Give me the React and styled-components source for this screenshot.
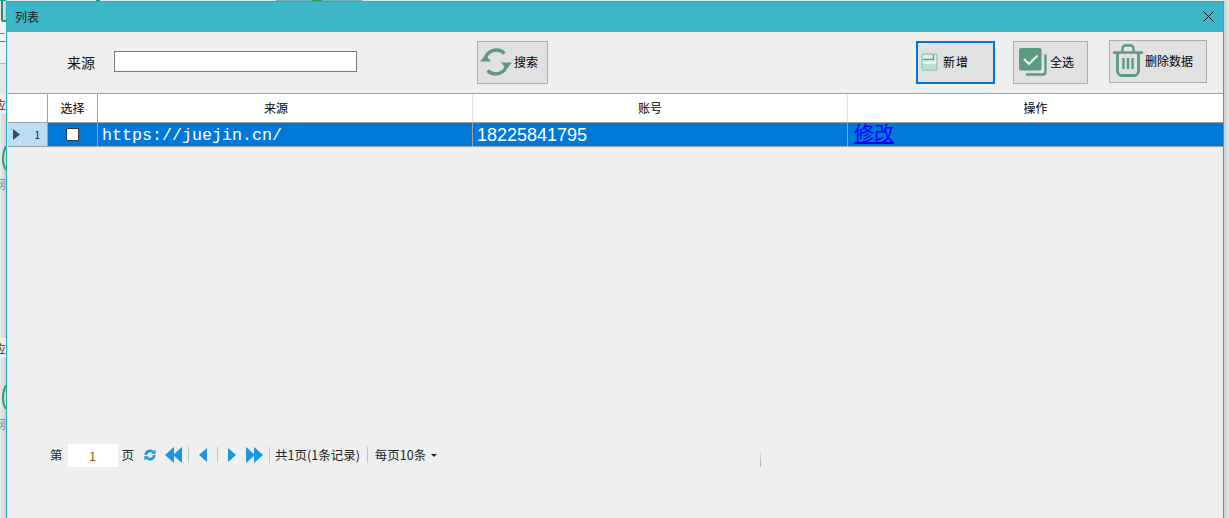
import React from 'react';
import styled, { createGlobalStyle } from 'styled-components';

const GlobalStyle = createGlobalStyle`
    html, body {
        margin: 0;
        padding: 0;
        background: #dedede;
        overflow: hidden;
    }
    body {
        font-family: "Noto Sans CJK SC", "Liberation Sans", sans-serif;
        color: #000;
    }
`;

const Page = styled.div`
    width: 1229px;
    height: 518px;
    display: flex;
    flex-direction: column;
    overflow: hidden;
`;

const TopEdge = styled.div`
    height: 1px;
    flex: none;
    background: linear-gradient(90deg,
        #1c9a8a 0 6px, #dfe8e8 6px 96px, #1c9a8a 96px 100px, #dfe8e8 100px 276px,
        #6fb3c0 276px 312px, #1e9e55 312px 322px, #6fb3c0 322px 362px, #dfe8e8 362px);
`;

const Body = styled.div`
    flex: 1;
    display: flex;
    min-height: 0;
`;

const LeftStrip = styled.div`
    width: 6px;
    flex: none;
    display: flex;
    flex-direction: column;
    overflow: hidden;
    background: linear-gradient(90deg, #ececec, #cfcfcf);
`;

const StripLogo = styled.div`
    height: 21px;
    width: 10px;
    flex: none;
    margin-left: 1px;
    box-sizing: border-box;
    border-left: 2px solid #17907f;
    border-bottom: 2px solid #17907f;
    border-bottom-left-radius: 3px;
`;

const StripText = styled.div`
    height: ${(p) => p.$h}px;
    flex: none;
    display: flex;
    justify-content: flex-end;
    align-items: center;
    white-space: nowrap;
    font-size: 12px;
    color: ${(p) => p.$color || '#333'};
    background: ${(p) => p.$bg || 'transparent'};
`;

const StripGap = styled.div`
    height: ${(p) => p.$h}px;
    flex: none;
    background: ${(p) => p.$bg || 'transparent'};
    border-bottom: ${(p) => (p.$line ? '1px solid #b5b5b5' : 'none')};
    box-sizing: border-box;
`;

const StripArc = styled.svg`
    display: block;
    flex: none;
`;

const RightStrip = styled.div`
    width: 5px;
    flex: none;
    background: linear-gradient(90deg, #c9c9c9, #ececec);
`;

const Win = styled.div`
    flex: 1;
    min-width: 0;
    display: flex;
    flex-direction: column;
    border: 1px solid #22b0c4;
    border-bottom: none;
    background: #efefef;
`;

const TitleBar = styled.div`
    height: 30px;
    flex: none;
    box-sizing: border-box;
    padding: 0 9px 2px 8px;
    background: #3db6c8;
    display: flex;
    align-items: center;
    justify-content: space-between;
    font-size: 12px;
    color: #1a1a1a;
`;

const CloseIcon = styled.svg`
    display: block;
`;

const Toolbar = styled.div`
    height: 61px;
    flex: none;
    box-sizing: border-box;
    padding: 9px 0 0 60px;
    display: flex;
    align-items: flex-start;
`;

const SearchLabel = styled.span`
    width: 28px;
    margin-top: 10px;
    font-size: 14px;
    line-height: 22px;
    color: #111;
`;

const SearchInput = styled.input`
    width: 243px;
    height: 21px;
    margin: 10px 120px 0 19px;
    box-sizing: border-box;
    border: 1px solid #7a7a7a;
    background: #fff;
    padding: 0 3px;
    outline: none;
`;

const ToolButton = styled.button`
    width: ${(p) => p.$w}px;
    height: 43px;
    flex: none;
    margin: ${(p) => (p.$raised ? '-1px' : '0')} 0 0 ${(p) => p.$gap || 0}px;
    padding: 0 0 2px ${(p) => p.$pad}px;
    box-sizing: border-box;
    display: flex;
    align-items: center;
    gap: ${(p) => p.$iconGap}px;
    border: ${(p) => (p.$focused ? '2px solid #0078d7' : '1px solid #adadad')};
    background: #e1e1e1;
    font-family: inherit;
    font-size: 12px;
    letter-spacing: ${(p) => (p.$spaced ? '1px' : '0')};
    color: #000;
    white-space: nowrap;
`;

const Icon = styled.svg`
    display: block;
    flex: none;
`;

const Table = styled.div`
    margin-left: 1px;
    flex: none;
`;

const Row = styled.div`
    display: grid;
    grid-template-columns: 40px 50px 375px 375px 375px;
    height: ${(p) => p.$h}px;
    box-sizing: border-box;
    border-top: ${(p) => (p.$head ? '1px solid #a0a0a0' : 'none')};
    border-bottom: 1px solid #a0a0a0;
`;

const HeadCell = styled.div`
    background: #fff;
    display: flex;
    align-items: center;
    justify-content: center;
    box-sizing: border-box;
    padding: 0 ${(p) => p.$shift || 0}px 1px 0;
    font-size: 12px;
    border-right: 1px solid ${(p) => (p.$strong ? '#a0a0a0' : '#e3e3e3')};
    &:last-child {
        border-right: none;
    }
`;

const RowHeader = styled.div`
    background: #bcdcf4;
    display: flex;
    align-items: center;
    justify-content: space-between;
    padding: 0 7px 0 5px;
    font-size: 10px;
    color: #222;
    border-right: 1px solid #a0a0a0;
`;

const Cell = styled.div`
    background: #0078d7;
    color: #fff;
    display: flex;
    align-items: center;
    justify-content: ${(p) => (p.$center ? 'center' : 'flex-start')};
    padding-left: ${(p) => (p.$center ? 0 : p.$pad || 4)}px;
    padding-top: ${(p) => (p.$center ? 0 : 1)}px;
    border-right: 1px solid #a0a0a0;
    overflow: hidden;
    &:last-child {
        border-right: none;
    }
`;

const CheckBox = styled.span`
    width: 13px;
    height: 13px;
    box-sizing: border-box;
    background: #fff;
    border: 1px solid #333;
    border-radius: 1px;
`;

const UrlText = styled.span`
    font-family: "Liberation Mono", monospace;
    font-size: 16.67px;
    white-space: nowrap;
`;

const PhoneText = styled.span`
    font-family: "Liberation Sans", sans-serif;
    font-size: 18px;
`;

const EditLink = styled.a`
    font-size: 20px;
    line-height: 23px;
    margin-bottom: 5px;
    color: #0000ff;
    text-decoration: underline;
`;

const Spacer = styled.div`
    flex: 1;
`;

const Pager = styled.div`
    height: 23px;
    margin-bottom: 52px;
    padding-left: 43px;
    flex: none;
    display: flex;
    align-items: center;
    font-size: 12.5px;
    color: #222;
    white-space: nowrap;
`;

const PageInput = styled.span`
    width: 50px;
    height: 23px;
    margin: 2px 4px 0 5px;
    background: #fff;
    display: flex;
    align-items: center;
    justify-content: center;
    font-size: 12px;
    color: #8a4b08;
`;

const PagerIcon = styled.svg`
    display: block;
    flex: none;
    margin-left: ${(p) => p.$ml || 0}px;
`;

const PagerSep = styled.span`
    width: 1px;
    height: 16px;
    flex: none;
    background: #c4c4c4;
    margin: 0 ${(p) => p.$mr || 0}px 0 ${(p) => p.$ml || 0}px;
`;

const Caret = styled.span`
    width: 0;
    height: 0;
    margin: 1px 0 0 5px;
    border-left: 3px solid transparent;
    border-right: 3px solid transparent;
    border-top: 3px solid #222;
`;

const FadeSep = styled.span`
    width: 1px;
    height: 20px;
    margin: 4px 0 0 323px;
    background: linear-gradient(180deg, #f4f4f4, #a8a8a8);
`;

const GREEN = '#5c9a82';
const BLUE = '#1a96dc';

function RefreshIcon() {
    return (
        <Icon width="32" height="30" viewBox="0 0 32 30" fill="none">
            <path d="M5 13A11.500 11.500 0 0 1 24.500 6.500" stroke={GREEN} strokeWidth="3.400" />
            <path d="M27 17A11.500 11.500 0 0 1 7.500 23.500" stroke={GREEN} strokeWidth="3.400" />
            <path d="M0 14.500L5.500 8l5.500 6.500z" fill={GREEN} />
            <path d="M21 15.500L26.500 22l5.500-6.500z" fill={GREEN} />
        </Icon>
    );
}

function SaveIcon() {
    return (
        <Icon width="17" height="18" viewBox="0 0 17 18" fill="none">
            <rect x="1" y="1" width="15" height="16" rx="2" fill="#e4efec" stroke="#8ccabf" strokeWidth="1.400" />
            <path d="M2 11h13v5H2z" fill="#bcdcd5" />
            <path d="M2 6.500h10.500V2" stroke="#3fa89a" strokeWidth="1.400" />
        </Icon>
    );
}

function CheckAllIcon() {
    return (
        <Icon width="28" height="28" viewBox="0 0 28 28" fill="none">
            <path d="M26.500 6.500V24a2.500 2.500 0 0 1-2.500 2.500H7" stroke={GREEN} strokeWidth="2.400" />
            <rect x="0" y="0" width="22.500" height="22.500" rx="2" fill={GREEN} />
            <path d="M5 11l5 5 8.500-8.500" stroke="#e4efeb" strokeWidth="2.200" />
        </Icon>
    );
}

function TrashIcon() {
    return (
        <Icon width="30" height="33" viewBox="0 0 30 33" fill="none">
            <path d="M1 8.500h28" stroke={GREEN} strokeWidth="2.600" strokeLinecap="round" />
            <path d="M9.500 8V4.500a3 3 0 0 1 3-3h5a3 3 0 0 1 3 3V8" stroke={GREEN} strokeWidth="2.400" />
            <path d="M4.500 9v18a4.500 4.500 0 0 0 4.500 4.500h12a4.500 4.500 0 0 0 4.500-4.500V9" stroke={GREEN} strokeWidth="2.800" />
            <path d="M10.500 14v11M15 14v11M19.500 14v11" stroke={GREEN} strokeWidth="2.400" />
        </Icon>
    );
}

function PagerRefresh() {
    return (
        <PagerIcon $ml={10} width="12" height="12" viewBox="0 0 12 12" fill="none">
            <path d="M1.800 6a4.200 4.200 0 0 1 7-3.100" stroke={BLUE} strokeWidth="2.600" />
            <path d="M10.200 6a4.200 4.200 0 0 1-7 3.100" stroke={BLUE} strokeWidth="2.600" />
            <path d="M7 4.500L11.500 5V.5z" fill={BLUE} />
            <path d="M5 7.500L.5 7v4.500z" fill={BLUE} />
        </PagerIcon>
    );
}

function DoubleArrow({ flip, ml }) {
    return (
        <PagerIcon $ml={ml} width="17" height="16" viewBox="0 0 17 16" style={flip ? { transform: 'scaleX(-1)' } : undefined}>
            <path d="M0 8l9-8v16z" fill={BLUE} />
            <path d="M8 8l9-8v16z" fill={BLUE} />
        </PagerIcon>
    );
}

function SingleArrow({ flip, ml }) {
    return (
        <PagerIcon $ml={ml} width="8" height="14" viewBox="0 0 8 14" style={flip ? { transform: 'scaleX(-1)' } : undefined}>
            <path d="M0 7l8-7v14z" fill={BLUE} />
        </PagerIcon>
    );
}

function LeftEdge() {
    return (
        <LeftStrip>
            <StripLogo />
            <StripGap $h={7} $bg="#f3f3f3" />
            <StripText $h={14} $bg="#f3f3f3" $color="#777">二</StripText>
            <StripGap $h={21} $bg="#f3f3f3" $line />
            <StripGap $h={30} $bg="#e6e6e6" />
            <StripText $h={20} $bg="#f0f0f0">应</StripText>
            <StripGap $h={32} />
            <StripArc width="6" height="25" viewBox="0 0 6 25" fill="none">
                <path d="M6 0C3.500 5 2.500 10 3 15c.3 4 1.500 7 3 9" stroke="#2f9e62" strokeWidth="2" />
            </StripArc>
            <StripGap $h={5} />
            <StripText $h={14} $color="#6f9f95">网</StripText>
            <StripGap $h={148} />
            <StripText $h={20} $bg="#f0f0f0">应</StripText>
            <StripGap $h={27} />
            <StripArc width="6" height="25" viewBox="0 0 6 25" fill="none">
                <path d="M6 0C3.500 5 2.500 10 3 15c.3 4 1.500 7 3 9" stroke="#2f9e62" strokeWidth="2" />
            </StripArc>
            <StripGap $h={6} />
            <StripText $h={14} $color="#6f9f95">网</StripText>
        </LeftStrip>
    );
}

export default function App() {
    return (
        <Page>
            <GlobalStyle />
            <TopEdge />
            <Body>
                <LeftEdge />
                <Win>
                    <TitleBar>
                        <span>列表</span>
                        <CloseIcon width="11" height="11" viewBox="0 0 11 11">
                            <path d="M.5.500l10 10M10.500.500l-10 10" stroke="#111" strokeWidth="1" fill="none" />
                        </CloseIcon>
                    </TitleBar>
                    <Toolbar>
                        <SearchLabel>来源</SearchLabel>
                        <SearchInput type="text" />
                        <ToolButton $w={71} $pad={2} $iconGap={2}>
                            <RefreshIcon />
                            搜索
                        </ToolButton>
                        <ToolButton $w={79} $gap={368} $pad={3} $iconGap={5} $focused $spaced>
                            <SaveIcon />
                            新增
                        </ToolButton>
                        <ToolButton $w={75} $gap={18} $pad={5} $iconGap={3}>
                            <CheckAllIcon />
                            全选
                        </ToolButton>
                        <ToolButton $w={98} $gap={21} $pad={3} $iconGap={2} $raised>
                            <TrashIcon />
                            删除数据
                        </ToolButton>
                    </Toolbar>
                    <Table>
                        <Row $h={30} $head>
                            <HeadCell $strong />
                            <HeadCell $strong>选择</HeadCell>
                            <HeadCell $shift={18}>来源</HeadCell>
                            <HeadCell $shift={20}>账号</HeadCell>
                            <HeadCell>操作</HeadCell>
                        </Row>
                        <Row $h={24}>
                            <RowHeader>
                                <Icon width="7" height="11" viewBox="0 0 7 11">
                                    <path d="M0 0l7 5.500L0 11z" fill="#3c4a55" />
                                </Icon>
                                <span>1</span>
                            </RowHeader>
                            <Cell $center>
                                <CheckBox />
                            </Cell>
                            <Cell>
                                <UrlText>https://juejin.cn/</UrlText>
                            </Cell>
                            <Cell>
                                <PhoneText>18225841795</PhoneText>
                            </Cell>
                            <Cell $pad={6}>
                                <EditLink href="#">修改</EditLink>
                            </Cell>
                        </Row>
                    </Table>
                    <Spacer />
                    <Pager>
                        <span>第</span>
                        <PageInput>1</PageInput>
                        <span>页</span>
                        <PagerRefresh />
                        <DoubleArrow ml={9} />
                        <PagerSep $ml={6} />
                        <SingleArrow ml={10} />
                        <PagerSep $ml={10} />
                        <SingleArrow flip ml={10} />
                        <DoubleArrow flip ml={10} />
                        <PagerSep $ml={6} $mr={5} />
                        <span>共1页(1条记录)</span>
                        <PagerSep $ml={7} $mr={7} />
                        <span>每页10条</span>
                        <Caret />
                        <FadeSep />
                    </Pager>
                </Win>
                <RightStrip />
            </Body>
        </Page>
    );
}
